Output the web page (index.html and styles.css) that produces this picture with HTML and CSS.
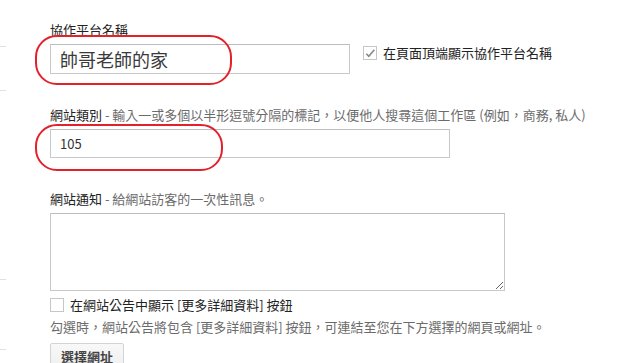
FILE: index.html
```html
<!DOCTYPE html>
<html lang="zh-Hant">
<head>
  <meta charset="UTF-8">
  <title>協作平台設定</title>
  <link rel="stylesheet" href="styles.css">
</head>
<body>
  <div class="page">
    <div class="side">
      <div class="side-item first"></div>
      <div class="side-item second"></div>
      <div class="side-item third"></div>
      <div class="side-item fourth"></div>
    </div>

    <form class="settings">
      <div class="label first-label">協作平台名稱</div>
      <div class="row">
        <div class="field">
          <input class="text big" type="text" value="帥哥老師的家">
          <span class="mark mark-name"></span>
        </div>
        <label class="check-label">
          <span class="box checked">
            <svg width="13" height="13" viewBox="0 0 13 13"><path d="M2.5 6.8 L5.2 9.6 L11.2 2.4" fill="none" stroke="#8a8a8a" stroke-width="1.8"/></svg>
          </span>
          在頁面頂端顯示協作平台名稱
        </label>
      </div>

      <div class="label">網站類別 <span class="hint">- 輸入一或多個以半形逗號分隔的標記，以便他人搜尋這個工作區 (例如，商務, 私人)</span></div>
      <div class="field">
        <input class="text tags" type="text" value="105">
        <span class="mark mark-tags"></span>
      </div>

      <div class="label">網站通知 <span class="hint">- 給網站訪客的一次性訊息。</span></div>
      <textarea class="notice"></textarea>

      <label class="check-label small">
        <span class="box"></span>
        在網站公告中顯示 [更多詳細資料] 按鈕
      </label>
      <div class="help">勾選時，網站公告將包含 [更多詳細資料] 按鈕，可連結至您在下方選擇的網頁或網址。</div>
      <button type="button" class="pick">選擇網址</button>
    </form>
  </div>
</body>
</html>
```

FILE: styles.css
```css
body {
  margin: 0;
  font-family: "Noto Sans CJK TC", "Liberation Sans", sans-serif;
  font-size: 13px;
  color: #222;
  background: #fff;
}
.page {
  display: flex;
}
.side {
  width: 6px;
  flex: none;
}
.side-item {
  border-bottom: 1px solid #e0e0e0;
}
.side-item.first {
  height: 46px;
}
.side-item.second {
  height: 43px;
}
.side-item.third {
  height: 188px;
}
.side-item.fourth {
  height: 69px;
}
.settings {
  padding-left: 44px;
  display: flex;
  flex-direction: column;
  align-items: flex-start;
}
.label {
  line-height: 16px;
  margin-top: 33px;
  margin-bottom: 6px;
  white-space: nowrap;
}
.label.first-label {
  margin-top: 22px;
}
.hint {
  color: #6b6b6b;
}
.row {
  display: flex;
  align-items: flex-start;
}
.field {
  position: relative;
}
.text {
  display: block;
  box-sizing: border-box;
  margin: 0;
  border: 1px solid #c8c8c8;
  border-top-color: #bdbdbd;
  font-family: "Noto Sans CJK TC", "Liberation Sans", sans-serif;
  color: #333;
  padding: 0 9px;
  outline: none;
}
.text.big {
  width: 300px;
  height: 30px;
  font-size: 18px;
  color: #3a3a3a;
}
.text.tags {
  width: 400px;
  height: 29px;
  font-size: 13px;
}
.mark {
  position: absolute;
  border: 2px solid #e3212b;
  border-radius: 22px;
  pointer-events: none;
}
.mark-name {
  left: -15px;
  top: -9px;
  width: 193px;
  height: 46px;
}
.mark-tags {
  left: -15px;
  top: -5px;
  width: 184px;
  height: 43px;
}
.check-label {
  display: flex;
  align-items: center;
  gap: 6px;
  margin-left: 13px;
  margin-top: 1px;
  line-height: 16px;
  color: #222;
}
.check-label.small {
  margin-left: 0;
  margin-top: 6px;
}
.box {
  width: 12px;
  height: 12px;
  border: 1px solid #c6c6c6;
  background: #fff;
  display: inline-flex;
  align-items: center;
  justify-content: center;
  overflow: hidden;
}
.notice {
  box-sizing: border-box;
  width: 455px;
  height: 78px;
  margin: 0;
  border: 1px solid #c8c8c8;
  border-top-color: #bdbdbd;
  resize: both;
}
.help {
  margin-top: 6px;
  line-height: 16px;
  color: #6b6b6b;
  white-space: nowrap;
}
.pick {
  margin-top: 8px;
  height: 27px;
  padding: 0 10px;
  font-family: "Noto Sans CJK TC", "Liberation Sans", sans-serif;
  font-size: 13px;
  font-weight: bold;
  color: #444;
  background: linear-gradient(#f8f8f8, #efefef);
  border: 1px solid #d4d4d4;
  border-radius: 2px;
}
```
